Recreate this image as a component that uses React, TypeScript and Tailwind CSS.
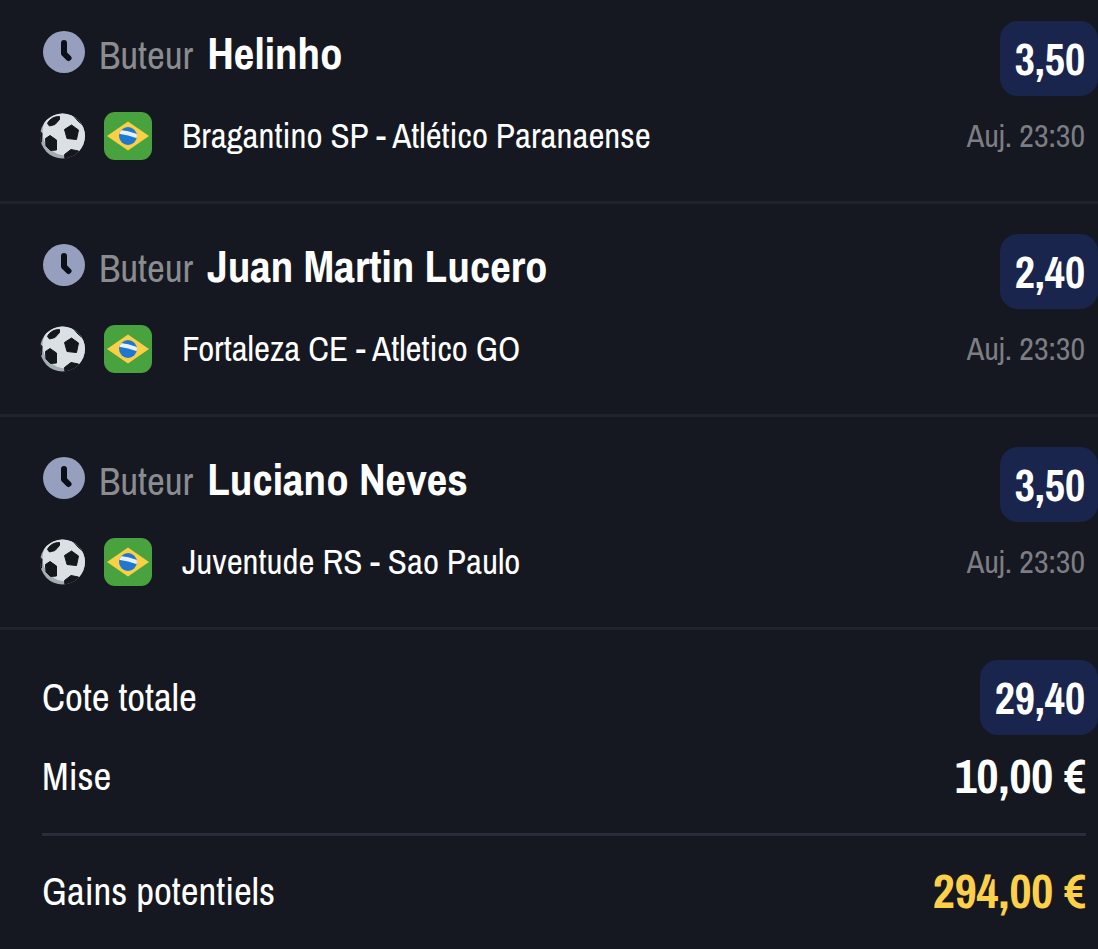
type Bet = {
  player: string;
  match: string;
  time: string;
  odds: string;
};

const bets: Bet[] = [
  { player: "Helinho", match: "Bragantino SP - Atlético Paranaense", time: "Auj. 23:30", odds: "3,50" },
  { player: "Juan Martin Lucero", match: "Fortaleza CE - Atletico GO", time: "Auj. 23:30", odds: "2,40" },
  { player: "Luciano Neves", match: "Juventude RS - Sao Paulo", time: "Auj. 23:30", odds: "3,50" },
];

function IconClock() {
  return (
    <svg width="42" height="42" viewBox="0 0 42 42" fill="none" className="shrink-0" aria-hidden="true">
      <circle cx="21" cy="21" r="21" fill="#969fbd" />
      <path d="M21 12V22.5L25.5 27" stroke="#0b0f18" strokeWidth="6" strokeLinecap="round" strokeLinejoin="round" />
    </svg>
  );
}

function IconBall() {
  return (
    <svg width="46" height="46" viewBox="0 0 46 46" className="shrink-0" aria-hidden="true">
      <defs>
        <clipPath id="ball">
          <circle cx="22.500" cy="23" r="22.500" />
        </clipPath>
      </defs>
      <g clipPath="url(#ball)">
        <rect width="46" height="46" fill="#a3abb3" />
        <circle cx="26" cy="19" r="23.500" fill="#dae0e4" />
        <g fill="#14181c" stroke="#14181c" strokeWidth="1" strokeLinejoin="round">
          <path d="M24.500 16.500L31.500 12L38.500 17L36.500 26.500L27 25.500Z" />
          <path d="M7.500 10.500C9 7 13 3.500 19.500 3.500L19.500 6.500L15 11.500L9.500 13Z" />
          <path d="M5.500 25.500L10 22.500L16.500 27L16.500 37L10.500 37.500L6 33Z" />
          <path d="M24.500 41.500L31 36.500L38.500 38L37 46H25Z" />
          <path d="M31 0L40 5L45 14L38 8Z" />
          <path d="M0 18L2 20.500L1.500 29H0Z" />
        </g>
      </g>
    </svg>
  );
}

function FlagBrazil() {
  return (
    <svg width="48" height="48" viewBox="0 0 48 48" className="shrink-0" role="img" aria-label="Brésil">
      <defs>
        <clipPath id="globe">
          <circle cx="24" cy="24" r="9" />
        </clipPath>
      </defs>
      <rect width="48" height="48" rx="11" fill="#48a33e" />
      <path d="M3 24L24 9.500L45 24L24 38.500Z" fill="#fbd044" />
      <circle cx="24" cy="24" r="9" fill="#1e78d2" />
      <path d="M13 19.500Q24 20.500 34 24.500" fill="none" stroke="#e8f1fa" strokeWidth="4" clipPath="url(#globe)" />
    </svg>
  );
}

function OddsBadge({ value }: { value: string }) {
  return (
    <span className="shrink-0 rounded-[18px] bg-[#1a254e] pt-4 pb-[14px] pl-[15px] pr-[13px] text-[44px] font-bold leading-[45px]">
      {value}
    </span>
  );
}

function BetRow({ bet }: { bet: Bet }) {
  return (
    <li className="border-b-[3px] border-[#20222e] pt-[30px] pb-[41px] first:pt-[21px]">
      <div className="flex items-start justify-between pl-[43px]">
        <div className="flex items-start gap-[14px] pt-[10px]">
          <IconClock />
          <p className="flex items-baseline gap-[14px] leading-[44px]">
            <span className="text-[39px] text-[#8b8c90]">Buteur</span>
            <strong className="text-[45px] font-bold">{bet.player}</strong>
          </p>
        </div>
        <OddsBadge value={bet.odds} />
      </div>
      <div className="mt-4 flex items-center pl-10 pr-[13px]">
        <IconBall />
        <span className="ml-[18px] flex">
          <FlagBrazil />
        </span>
        <p className="ml-[30px] text-[35px] leading-[48px]">{bet.match}</p>
        <time className="ml-auto text-[32px] leading-[48px] text-[#7c7e84]">{bet.time}</time>
      </div>
    </li>
  );
}

export default function App() {
  return (
    <main className="min-h-screen bg-[#151820] font-['Archivo_Narrow','Liberation_Sans_Narrow','Liberation_Sans',sans-serif] text-white">
      <ul>
        {bets.map((bet) => (
          <BetRow key={bet.player} bet={bet} />
        ))}
      </ul>
      <dl className="pt-[30px] text-[39px]">
        <div className="flex items-center justify-between pl-[42px]">
          <dt>Cote totale</dt>
          <dd className="flex">
            <OddsBadge value="29,40" />
          </dd>
        </div>
        <div className="ml-[42px] mr-3 flex items-center justify-between border-b-[3px] border-[#2a2c3a] pt-3 pb-[27px]">
          <dt>Mise</dt>
          <dd className="text-[48px] font-bold leading-[56px]">10,00 €</dd>
        </div>
        <div className="ml-[42px] mr-3 flex items-center justify-between pt-[26px] pb-6">
          <dt>Gains potentiels</dt>
          <dd className="text-[48px] font-bold leading-[56px] text-[#fdd04a]">294,00 €</dd>
        </div>
      </dl>
    </main>
  );
}
